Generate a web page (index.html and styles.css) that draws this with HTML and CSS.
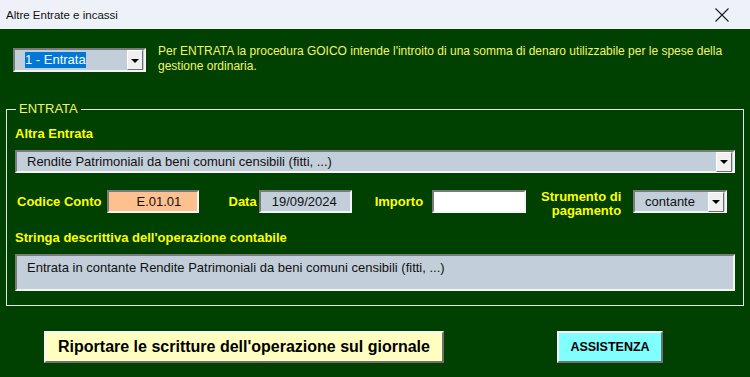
FILE: index.html
```html
<!DOCTYPE html>
<html lang="it">
<head>
<meta charset="utf-8">
<title>Altre Entrate e incassi</title>
<link rel="stylesheet" href="styles.css">
</head>
<body>
<div class="window">
  <div class="titlebar">
    <span class="title">Altre Entrate e incassi</span>
    <svg class="close" width="14" height="14" viewBox="0 0 14 14" aria-hidden="true"><path d="M0.5 0.5 L13.5 13.5 M13.5 0.5 L0.5 13.5" stroke="#1b1b1b" stroke-width="1.1" fill="none"/></svg>
  </div>
  <div class="content">
    <div class="top">
      <div class="combo combo-type">
        <span class="combo-text"><span class="selected">1 - Entrata</span></span>
        <span class="drop"><i class="arrow"></i></span>
      </div>
      <p class="intro">Per ENTRATA la procedura GOICO intende l'introito di una somma di denaro utilizzabile per le spese della<br>gestione ordinaria.</p>
    </div>

    <fieldset class="frame">
      <legend class="frame-title">ENTRATA</legend>
      <div class="label label-first">Altra Entrata</div>
      <div class="combo combo-wide">
        <span class="combo-text">Rendite Patrimoniali da beni comuni censibili (fitti, ...)</span>
        <span class="drop"><i class="arrow"></i></span>
      </div>

      <div class="row">
        <span class="label label-code">Codice Conto</span>
        <span class="field field-code">E.01.01</span>
        <span class="label label-date">Data</span>
        <span class="field field-date">19/09/2024</span>
        <span class="label label-amount">Importo</span>
        <span class="field field-amount"></span>
        <span class="label label-method">Strumento di<br>pagamento</span>
        <div class="combo combo-method">
          <span class="combo-text">contante</span>
          <span class="drop"><i class="arrow"></i></span>
        </div>
      </div>

      <div class="label label-desc">Stringa descrittiva dell'operazione contabile</div>
      <div class="field field-desc">Entrata in contante Rendite Patrimoniali da beni comuni censibili (fitti, ...)</div>
    </fieldset>

    <div class="actions">
      <button class="btn btn-journal" type="button">Riportare le scritture dell'operazione sul giornale</button>
      <button class="btn btn-help" type="button">ASSISTENZA</button>
    </div>
  </div>
</div>
</body>
</html>
```

FILE: styles.css
```css
* { box-sizing: border-box; }

html, body {
  margin: 0;
  padding: 0;
  background: #004000;
}

body {
  font-family: "Liberation Sans", Arial, sans-serif;
  width: 750px;
  height: 377px;
  overflow: hidden;
}

.window {
  width: 750px;
  height: 377px;
  display: flex;
  flex-direction: column;
}

.titlebar {
  height: 29px;
  flex: 0 0 29px;
  background: #eef2f8;
  display: flex;
  align-items: center;
  justify-content: space-between;
  padding: 0 21px 0 6px;
}

.title {
  font-family: "Liberation Sans", Arial, sans-serif;
  font-size: 11.5px;
  color: #111;
  line-height: 16px;
}

.close { display: block; }

.content {
  flex: 1;
  background: #004000;
  padding-top: 19px;
}

/* top row */
.top {
  display: flex;
  align-items: flex-start;
  padding-left: 13px;
}

.intro {
  margin: -4px 0 0 12px;
  font-size: 12px;
  line-height: 15px;
  color: #f4f46c;
}

/* combo boxes */
.combo {
  display: flex;
  align-items: center;
  border: 2px solid;
  border-color: #7a7a7a #f4f4f4 #f4f4f4 #7a7a7a;
  background: #c2ced9;
  color: #111;
  font-size: 13px;
}

.combo-text {
  flex: 1;
  white-space: nowrap;
  overflow: hidden;
}

.drop {
  width: 16px;
  height: 20px;
  margin-right: 1px;
  background: #f0f0f0;
  border: 1px solid;
  border-color: #ffffff #6e6e6e #6e6e6e #ffffff;
  display: flex;
  align-items: center;
  justify-content: center;
}

.arrow {
  display: block;
  width: 0;
  height: 0;
  border-left: 4px solid transparent;
  border-right: 4px solid transparent;
  border-top: 4px solid #000;
  margin-top: 1px;
}

.combo-type {
  width: 133px;
  height: 24px;
}

.combo-type .combo-text { padding-left: 10px; }

.selected {
  display: inline-block;
  background: #0078d7;
  color: #fff;
  line-height: 16px;
}

.combo-wide {
  margin-top: 8px;
  height: 23px;
}

.combo-wide .combo-text { padding-left: 10px; }
.combo-wide .drop { height: 20px; }

.combo-method {
  width: 94px;
  height: 23px;
  margin-left: 12px;
}

.combo-method .combo-text { padding-left: 10px; }

/* frame */
.frame {
  margin: 27px 6px 0;
  padding: 0 8px 14px;
  border: 1px solid #e4e4e4;
  min-width: 0;
}

.frame-title {
  margin-left: 1px;
  padding: 0 3px;
  font-size: 13px;
  line-height: 16px;
  color: #f4f46c;
}

.label {
  font-size: 13px;
  font-weight: bold;
  line-height: 16px;
  color: #ffff00;
  white-space: nowrap;
}

.label-first { margin-top: 9px; }

.row {
  display: flex;
  margin-top: 17px;
  height: 28px;
  align-items: flex-start;
}

.row > .label { line-height: 23px; }

.label-code { margin-left: 2px; }

.field {
  display: block;
  height: 23px;
  border: 2px solid;
  border-color: #7a7a7a #f4f4f4 #f4f4f4 #7a7a7a;
  font-size: 13px;
  line-height: 19px;
  color: #111;
  white-space: nowrap;
}

.field-code {
  width: 92px;
  margin-left: 5px;
  background: #ffc090;
  padding-left: 28px;
}

.label-date { margin-left: 30px; }

.field-date {
  width: 93px;
  margin-left: 2px;
  background: #c2ced9;
  padding-left: 11px;
}

.label-amount { margin-left: 23px; }

.field-amount {
  width: 94px;
  margin-left: 9px;
  background: #ffffff;
}

.row > .label-method {
  width: 80px;
  margin-left: 15px;
  text-align: right;
  line-height: 14px;
}

.label-desc { margin-top: 12px; }

.field-desc {
  margin-top: 8px;
  height: 37px;
  background: #c2ced9;
  padding: 4px 0 0 10px;
  line-height: 16px;
}

/* buttons */
.actions {
  display: flex;
  margin-top: 25px;
  padding-left: 44px;
}

.btn {
  height: 32px;
  border: 2px solid;
  border-color: #f8f8f8 #707070 #707070 #f8f8f8;
  font-family: "Liberation Sans", Arial, sans-serif;
  font-weight: bold;
  color: #000;
  padding: 0;
  cursor: default;
}

.btn-journal {
  width: 400px;
  background: #ffffc0;
  font-size: 16px;
}

.btn-help {
  width: 106px;
  margin-left: 113px;
  background: #80ffff;
  font-size: 12.5px;
}
```
